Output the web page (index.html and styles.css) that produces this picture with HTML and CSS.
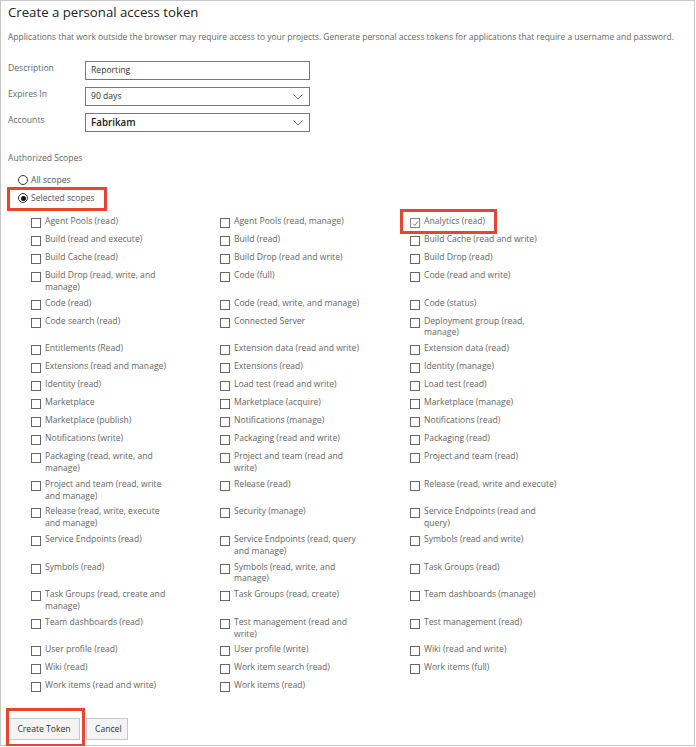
FILE: index.html
```html
<!DOCTYPE html>
<html lang="en">
<head>
<meta charset="utf-8">
<title>Create a personal access token</title>
<link rel="stylesheet" href="styles.css">
</head>
<body>
<div class="page">
  <h1 class="title">Create a personal access token</h1>
  <p class="intro">Applications that work outside the browser may require access to your projects. Generate personal access tokens for applications that require a username and password.</p>

  <div class="form">
    <div class="field">
      <span class="field-label">Description</span>
      <div class="box">Reporting</div>
    </div>
    <div class="field">
      <span class="field-label">Expires In</span>
      <div class="box select">90 days<svg class="chev" width="10" height="6" viewBox="0 0 10 6"><polyline points="0.5,0.5 5,5 9.5,0.5" fill="none" stroke="#777" stroke-width="1"/></svg></div>
    </div>
    <div class="field">
      <span class="field-label">Accounts</span>
      <div class="box select strong">Fabrikam<svg class="chev" width="10" height="6" viewBox="0 0 10 6"><polyline points="0.5,0.5 5,5 9.5,0.5" fill="none" stroke="#777" stroke-width="1"/></svg></div>
    </div>
  </div>

  <div class="scopes-label">Authorized Scopes</div>
  <div class="radios">
    <div class="radio"><span class="circle"></span>All scopes</div>
    <div class="radio checked marked"><span class="circle"></span>Selected scopes</div>
  </div>

  <div class="scope-grid">
    <div class="scope"><span class="cb"></span><span class="txt">Agent Pools (read)</span></div>
    <div class="scope"><span class="cb"></span><span class="txt">Agent Pools (read, manage)</span></div>
    <div class="scope marked-cb"><span class="cb on"><svg width="9" height="9" viewBox="0 0 9 9"><polyline points="2,4.5 3.8,6.3 7,2.5" fill="none" stroke="#777" stroke-width="0.9"/></svg></span><span class="txt">Analytics (read)</span></div>

    <div class="scope"><span class="cb"></span><span class="txt">Build (read and execute)</span></div>
    <div class="scope"><span class="cb"></span><span class="txt">Build (read)</span></div>
    <div class="scope"><span class="cb"></span><span class="txt">Build Cache (read and write)</span></div>

    <div class="scope"><span class="cb"></span><span class="txt">Build Cache (read)</span></div>
    <div class="scope"><span class="cb"></span><span class="txt">Build Drop (read and write)</span></div>
    <div class="scope"><span class="cb"></span><span class="txt">Build Drop (read)</span></div>

    <div class="scope"><span class="cb"></span><span class="txt">Build Drop (read, write, and manage)</span></div>
    <div class="scope"><span class="cb"></span><span class="txt">Code (full)</span></div>
    <div class="scope"><span class="cb"></span><span class="txt">Code (read and write)</span></div>

    <div class="scope"><span class="cb"></span><span class="txt">Code (read)</span></div>
    <div class="scope"><span class="cb"></span><span class="txt">Code (read, write, and manage)</span></div>
    <div class="scope"><span class="cb"></span><span class="txt">Code (status)</span></div>

    <div class="scope"><span class="cb"></span><span class="txt">Code search (read)</span></div>
    <div class="scope"><span class="cb"></span><span class="txt">Connected Server</span></div>
    <div class="scope"><span class="cb"></span><span class="txt">Deployment group (read, manage)</span></div>

    <div class="scope"><span class="cb"></span><span class="txt">Entitlements (Read)</span></div>
    <div class="scope"><span class="cb"></span><span class="txt">Extension data (read and write)</span></div>
    <div class="scope"><span class="cb"></span><span class="txt">Extension data (read)</span></div>

    <div class="scope"><span class="cb"></span><span class="txt">Extensions (read and manage)</span></div>
    <div class="scope"><span class="cb"></span><span class="txt">Extensions (read)</span></div>
    <div class="scope"><span class="cb"></span><span class="txt">Identity (manage)</span></div>

    <div class="scope"><span class="cb"></span><span class="txt">Identity (read)</span></div>
    <div class="scope"><span class="cb"></span><span class="txt">Load test (read and write)</span></div>
    <div class="scope"><span class="cb"></span><span class="txt">Load test (read)</span></div>

    <div class="scope"><span class="cb"></span><span class="txt">Marketplace</span></div>
    <div class="scope"><span class="cb"></span><span class="txt">Marketplace (acquire)</span></div>
    <div class="scope"><span class="cb"></span><span class="txt">Marketplace (manage)</span></div>

    <div class="scope"><span class="cb"></span><span class="txt">Marketplace (publish)</span></div>
    <div class="scope"><span class="cb"></span><span class="txt">Notifications (manage)</span></div>
    <div class="scope"><span class="cb"></span><span class="txt">Notifications (read)</span></div>

    <div class="scope"><span class="cb"></span><span class="txt">Notifications (write)</span></div>
    <div class="scope"><span class="cb"></span><span class="txt">Packaging (read and write)</span></div>
    <div class="scope"><span class="cb"></span><span class="txt">Packaging (read)</span></div>

    <div class="scope"><span class="cb"></span><span class="txt">Packaging (read, write, and manage)</span></div>
    <div class="scope"><span class="cb"></span><span class="txt">Project and team (read and write)</span></div>
    <div class="scope"><span class="cb"></span><span class="txt">Project and team (read)</span></div>

    <div class="scope"><span class="cb"></span><span class="txt">Project and team (read, write and manage)</span></div>
    <div class="scope"><span class="cb"></span><span class="txt">Release (read)</span></div>
    <div class="scope"><span class="cb"></span><span class="txt">Release (read, write and execute)</span></div>

    <div class="scope"><span class="cb"></span><span class="txt">Release (read, write, execute and manage)</span></div>
    <div class="scope"><span class="cb"></span><span class="txt">Security (manage)</span></div>
    <div class="scope"><span class="cb"></span><span class="txt">Service Endpoints (read and query)</span></div>

    <div class="scope"><span class="cb"></span><span class="txt">Service Endpoints (read)</span></div>
    <div class="scope"><span class="cb"></span><span class="txt">Service Endpoints (read, query and manage)</span></div>
    <div class="scope"><span class="cb"></span><span class="txt">Symbols (read and write)</span></div>

    <div class="scope"><span class="cb"></span><span class="txt">Symbols (read)</span></div>
    <div class="scope"><span class="cb"></span><span class="txt">Symbols (read, write, and manage)</span></div>
    <div class="scope"><span class="cb"></span><span class="txt">Task Groups (read)</span></div>

    <div class="scope"><span class="cb"></span><span class="txt">Task Groups (read, create and manage)</span></div>
    <div class="scope"><span class="cb"></span><span class="txt">Task Groups (read, create)</span></div>
    <div class="scope"><span class="cb"></span><span class="txt">Team dashboards (manage)</span></div>

    <div class="scope"><span class="cb"></span><span class="txt">Team dashboards (read)</span></div>
    <div class="scope"><span class="cb"></span><span class="txt">Test management (read and write)</span></div>
    <div class="scope"><span class="cb"></span><span class="txt">Test management (read)</span></div>

    <div class="scope"><span class="cb"></span><span class="txt">User profile (read)</span></div>
    <div class="scope"><span class="cb"></span><span class="txt">User profile (write)</span></div>
    <div class="scope"><span class="cb"></span><span class="txt">Wiki (read and write)</span></div>

    <div class="scope"><span class="cb"></span><span class="txt">Wiki (read)</span></div>
    <div class="scope"><span class="cb"></span><span class="txt">Work item search (read)</span></div>
    <div class="scope"><span class="cb"></span><span class="txt">Work items (full)</span></div>

    <div class="scope"><span class="cb"></span><span class="txt">Work items (read and write)</span></div>
    <div class="scope"><span class="cb"></span><span class="txt">Work items (read)</span></div>
  </div>

  <div class="actions">
    <button class="btn marked-btn">Create Token</button>
    <button class="btn">Cancel</button>
  </div>
</div>
</body>
</html>
```

FILE: styles.css
```css
html, body {
  margin: 0;
  padding: 0;
  background: #fff;
}

body {
  font-family: "Open Sans", "Noto Sans", "Liberation Sans", sans-serif;
  color: #666;
}

.page {
  box-sizing: border-box;
  width: 695px;
  height: 746px;
  border: 1px solid #c6c6c6;
  padding: 0 7px;
}

.title {
  margin: 0;
  font-size: 13.2px;
  line-height: 22px;
  font-weight: 400;
  color: #222;
}

.intro {
  margin: 7px 0 0;
  font-size: 8.45px;
  line-height: 14px;
  color: #666;
  white-space: nowrap;
}

.form {
  margin-top: 17px;
  display: flex;
  flex-direction: column;
  gap: 7px;
}

.field {
  display: flex;
  align-items: flex-start;
}

.field-label {
  width: 77px;
  font-size: 8.6px;
  line-height: 14px;
  color: #666;
}

.box {
  box-sizing: border-box;
  width: 225px;
  height: 19px;
  border: 1px solid #777;
  padding: 0 6px 0 5px;
  font-size: 8.6px;
  line-height: 17px;
  color: #333;
  display: flex;
  align-items: center;
  justify-content: space-between;
}

.box.strong {
  font-size: 9.8px;
  font-weight: 600;
  color: #222;
}

.chev {
  display: block;
}

.scopes-label {
  margin-top: 19px;
  font-size: 8.6px;
  line-height: 14px;
  color: #666;
}

.radios {
  margin-top: 6px;
  margin-left: 2px;
  display: flex;
  flex-direction: column;
  align-items: flex-start;
}

.radio {
  position: relative;
  display: flex;
  align-items: center;
  height: 18px;
  padding: 0 8px;
  font-size: 8.6px;
  color: #555;
}

.circle {
  box-sizing: border-box;
  width: 10px;
  height: 10px;
  border: 1px solid #333;
  border-radius: 50%;
  margin-right: 3px;
  display: flex;
  align-items: center;
  justify-content: center;
}

.radio.checked .circle::before {
  content: "";
  width: 5px;
  height: 5px;
  border-radius: 50%;
  background: #111;
}

.marked::after,
.marked-cb::after,
.marked-btn::after {
  content: "";
  position: absolute;
  border: 3px solid #e8452f;
  pointer-events: none;
}

.marked::after {
  left: -3px;
  right: -4px;
  top: -2px;
  bottom: -4px;
}

.scope-grid {
  margin-top: 7px;
  margin-left: 23px;
  display: grid;
  grid-template-columns: 189px 190px 190px;
}

.scope {
  position: relative;
  display: flex;
  align-items: flex-start;
  padding: 2px 0;
  min-height: 14px;
}

.cb {
  box-sizing: border-box;
  flex: none;
  width: 10px;
  height: 10px;
  margin-top: 2px;
  margin-right: 4px;
  border: 1px solid #666;
  display: flex;
}

.cb svg {
  margin: -0.5px;
}

.cb.on {
  border-color: #888;
}

.txt {
  max-width: 132px;
  font-size: 8.6px;
  line-height: 11.8px;
  color: #666;
}

.scope:nth-child(3n) .txt {
  max-width: 135px;
}

.marked-cb {
  justify-self: start;
}

.marked-cb::after {
  left: -10px;
  right: -12px;
  top: -5px;
  bottom: -2px;
}

.actions {
  margin-top: 22px;
  display: flex;
  gap: 6px;
}

.btn {
  position: relative;
  box-sizing: border-box;
  height: 22px;
  padding: 0 8px;
  margin: 0;
  border: 1px solid #c8c8c8;
  background: #f4f4f4;
  font-family: "Open Sans", "Noto Sans", "Liberation Sans", sans-serif;
  font-size: 8.6px;
  color: #333;
}

.btn.marked-btn {
  width: 72px;
}

.btn + .btn {
  width: 42px;
}

.marked-btn::after {
  left: -3px;
  right: -6px;
  top: -11px;
  bottom: -8px;
}
```
